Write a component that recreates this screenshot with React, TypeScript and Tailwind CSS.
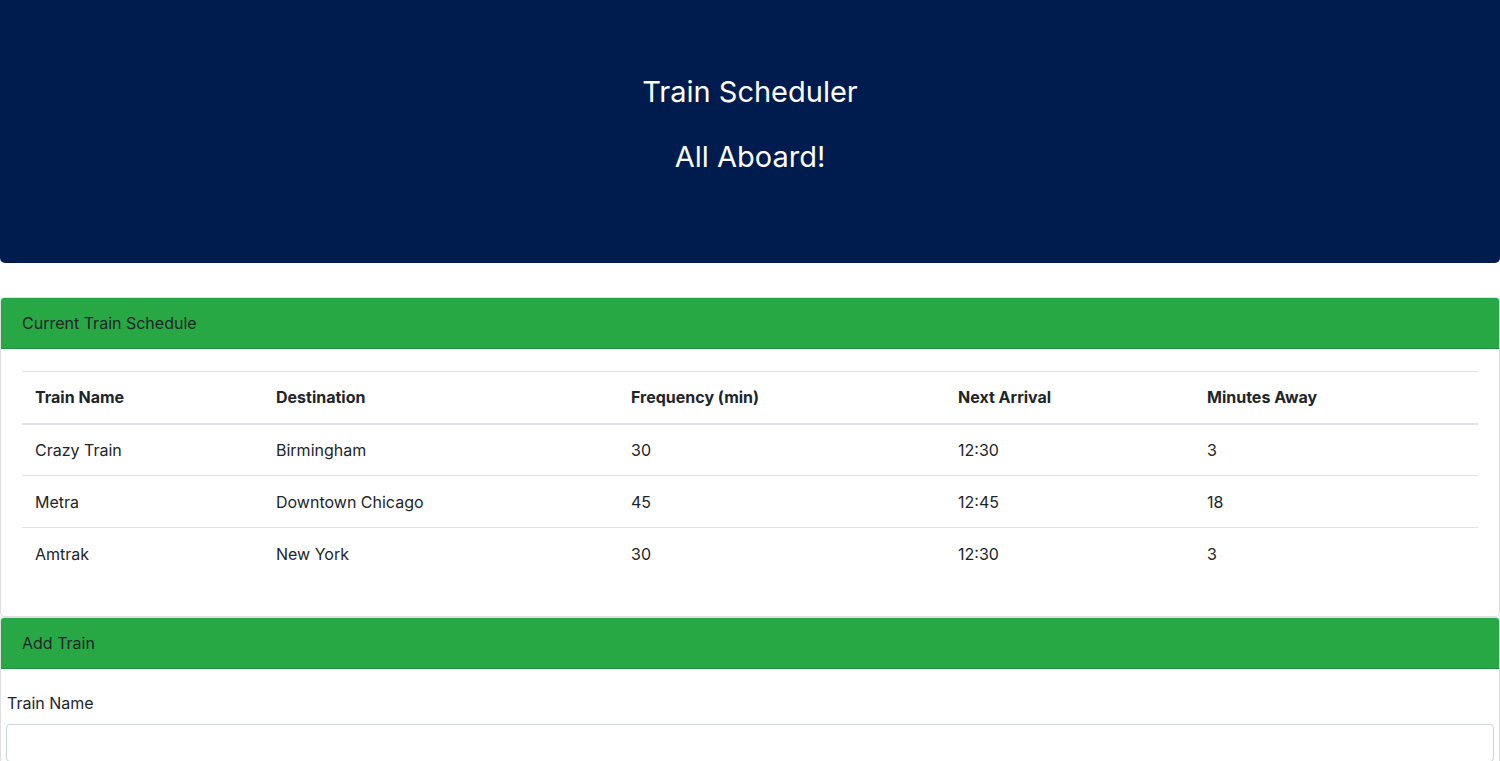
import React from 'react';

const trains = [
  { name: 'Crazy Train', dest: 'Birmingham', freq: '30', next: '12:30', away: '3' },
  { name: 'Metra', dest: 'Downtown Chicago', freq: '45', next: '12:45', away: '18' },
  { name: 'Amtrak', dest: 'New York', freq: '30', next: '12:30', away: '3' },
];

const App = () => {
  return (
    <div className="min-h-screen bg-white text-[#212529] font-['Inter','Liberation_Sans',sans-serif] text-[16px]">
      {/* ===== JUMBOTRON ===== */}
      <div className="bg-[#001b4e] rounded-b-[5px] pt-[74px] pb-[88px] flex flex-col items-center gap-[29px] text-white">
        <h1 className="text-[29px] leading-[36px] font-normal">Train Scheduler</h1>
        <h2 className="text-[29px] leading-[36px] font-normal">All Aboard!</h2>
      </div>

      {/* ===== SCHEDULE ===== */}
      <div className="mt-[34px] border border-black/[0.125] rounded-[4px] overflow-hidden">
        <div className="bg-[#28a745] h-[51px] px-[21px] flex items-center border-b border-black/[0.125]">
          Current Train Schedule
        </div>
        <div className="px-[21px] pt-[22px] pb-[36px]">
          <table className="w-full border-collapse text-left">
            <thead>
              <tr className="border-t border-[#dee2e6] border-b-2">
                <th className="w-[242px] h-[52px] pl-[13px] pr-3 font-bold">Train Name</th>
                <th className="w-[355px] px-3 font-bold">Destination</th>
                <th className="w-[327px] px-3 font-bold">Frequency (min)</th>
                <th className="w-[249px] px-3 font-bold">Next Arrival</th>
                <th className="px-3 font-bold">Minutes Away</th>
              </tr>
            </thead>
            <tbody>
              {trains.map((t, i) => (
                <tr key={i} className={i > 0 ? 'border-t border-[#dee2e6]' : ''}>
                  <td className="h-[52px] pl-[13px] pr-3">{t.name}</td>
                  <td className="px-3">{t.dest}</td>
                  <td className="px-3">{t.freq}</td>
                  <td className="px-3">{t.next}</td>
                  <td className="px-3">{t.away}</td>
                </tr>
              ))}
            </tbody>
          </table>
        </div>
      </div>

      {/* ===== ADD TRAIN ===== */}
      <div className="border border-black/[0.125] rounded-[4px] overflow-hidden">
        <div className="bg-[#28a745] h-[51px] px-[21px] flex items-center border-b border-black/[0.125]">
          Add Train
        </div>
        <div className="px-[5px] pt-[22px] pb-4">
          <label className="block ml-[1px] mb-[9px] leading-[24px]">Train Name</label>
          <input className="block w-full h-[38px] border border-[#ced4da] rounded-[4px] px-3" />
        </div>
      </div>
    </div>
  );
};

export default App;
